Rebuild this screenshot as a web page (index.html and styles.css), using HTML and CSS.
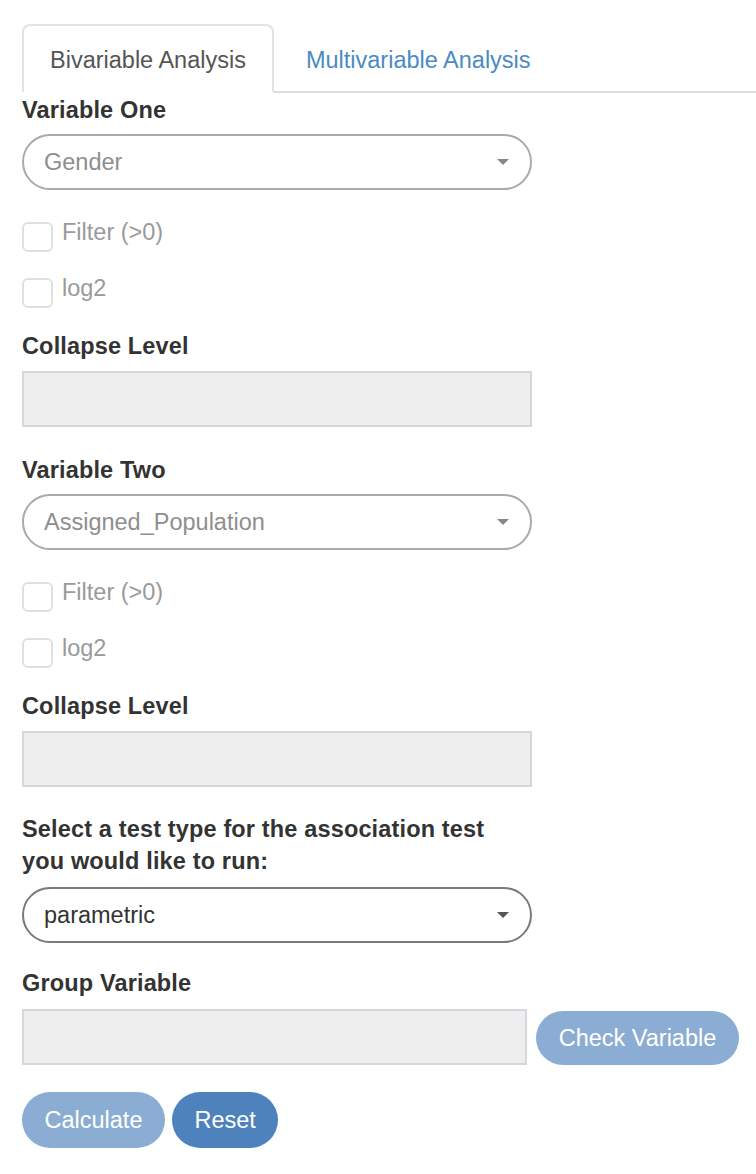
FILE: index.html
```html
<!DOCTYPE html>
<html lang="en">
<head>
<meta charset="utf-8">
<title>Association Test</title>
<link rel="stylesheet" href="styles.css">
</head>
<body>
<div class="page">
  <ul class="tabs">
    <li class="tab active">Bivariable Analysis</li>
    <li class="tab link">Multivariable Analysis</li>
  </ul>

  <div class="label l-first">Variable One</div>
  <div class="select muted s-after-label">
    <span>Gender</span>
    <span class="caret"></span>
  </div>
  <div class="check c-first"><span class="box"></span><span class="check-text">Filter (&gt;0)</span></div>
  <div class="check c-second"><span class="box"></span><span class="check-text">log2</span></div>
  <div class="label l-collapse">Collapse Level</div>
  <div class="field f-after-label"></div>

  <div class="label l-section">Variable Two</div>
  <div class="select muted s-after-label">
    <span>Assigned_Population</span>
    <span class="caret"></span>
  </div>
  <div class="check c-first"><span class="box"></span><span class="check-text">Filter (&gt;0)</span></div>
  <div class="check c-second"><span class="box"></span><span class="check-text">log2</span></div>
  <div class="label l-collapse">Collapse Level</div>
  <div class="field f-after-label"></div>

  <div class="label l-test">Select a test type for the association test<br>you would like to run:</div>
  <div class="select filled s-after-test">
    <span>parametric</span>
    <span class="caret"></span>
  </div>

  <div class="label l-group">Group Variable</div>
  <div class="group-row">
    <div class="field field-narrow"></div>
    <button class="btn btn-disabled btn-check" type="button">Check Variable</button>
  </div>

  <div class="actions">
    <button class="btn btn-disabled" type="button">Calculate</button>
    <button class="btn btn-primary" type="button">Reset</button>
  </div>
</div>
</body>
</html>
```

FILE: styles.css
```css
html, body {
  margin: 0;
  padding: 0;
  background: #ffffff;
}

body {
  font-family: "Liberation Sans", Arial, Helvetica, sans-serif;
  color: #333333;
}

.page {
  padding: 24px 0 40px 22px;
}

/* Tabs */
.tabs {
  list-style: none;
  margin: 0;
  padding: 0;
  display: flex;
  gap: 4px;
  border-bottom: 2px solid #dedede;
  height: 67px;
}

.tab {
  box-sizing: border-box;
  height: 69px;
  margin-bottom: -2px;
  padding: 3px 26px 0;
  display: flex;
  align-items: center;
  font-size: 23.5px;
  border: 2px solid transparent;
  border-radius: 8px 8px 0 0;
}

.tab.active {
  color: #555555;
  background: #ffffff;
  border-color: #e2e2e2 #e2e2e2 #ffffff #e2e2e2;
}

.tab.link {
  color: #4a8bc2;
}

/* Labels */
.label {
  font-weight: bold;
  font-size: 23.5px;
  letter-spacing: 0.15px;
  line-height: 32px;
  color: #333333;
}

.l-first { margin-top: 1px; }
.l-collapse { margin-top: 22px; }
.l-section { margin-top: 27px; }
.l-test { margin-top: 26px; }
.l-group { margin-top: 24px; }

/* Select */
.select {
  box-sizing: border-box;
  width: 510px;
  height: 56px;
  border: 2px solid #aaaaaa;
  border-radius: 28px;
  display: flex;
  align-items: center;
  justify-content: space-between;
  padding: 0 21px 0 20px;
  font-size: 23.5px;
}

.select.muted {
  color: #8e8e8e;
}

.select.filled {
  color: #333333;
  border-color: #7a7a7a;
}

.s-after-label { margin-top: 8px; }
.s-after-test { margin-top: 10px; }

.caret {
  width: 0;
  height: 0;
  border-left: 6px solid transparent;
  border-right: 6px solid transparent;
  border-top: 6px solid #888888;
}

.select.filled .caret {
  border-top-color: #555555;
}

/* Checkboxes */
.check {
  display: flex;
  align-items: flex-start;
  font-size: 23.5px;
  line-height: 32px;
  color: #9a9a9a;
}

.c-first { margin-top: 26px; }
.c-second { margin-top: 20px; }

.box {
  box-sizing: border-box;
  width: 31px;
  height: 30px;
  margin-top: 6px;
  border: 2px solid #e0e0e0;
  border-radius: 6px;
  background: #ffffff;
}

.check-text {
  margin-left: 9px;
}

/* Disabled text fields */
.field {
  box-sizing: border-box;
  width: 510px;
  height: 56px;
  background: #eeeeee;
  border: 2px solid #d4d7dd;
}

.f-after-label { margin-top: 9px; }

.group-row {
  margin-top: 10px;
  display: flex;
  align-items: flex-end;
  gap: 9px;
}

.field.field-narrow {
  width: 505px;
}

/* Buttons */
.btn {
  box-sizing: border-box;
  height: 56px;
  border: none;
  border-radius: 28px;
  padding: 0 22.5px;
  font-family: "Liberation Sans", Arial, Helvetica, sans-serif;
  font-size: 23.5px;
  color: #ffffff;
}

.btn-check {
  height: 54px;
  border-radius: 27px;
  width: 203px;
  padding: 0;
}

.btn-disabled {
  background: #8badd3;
}

.btn-primary {
  background: #4e82bd;
}

.actions {
  margin-top: 27px;
  display: flex;
  gap: 7px;
}
```
